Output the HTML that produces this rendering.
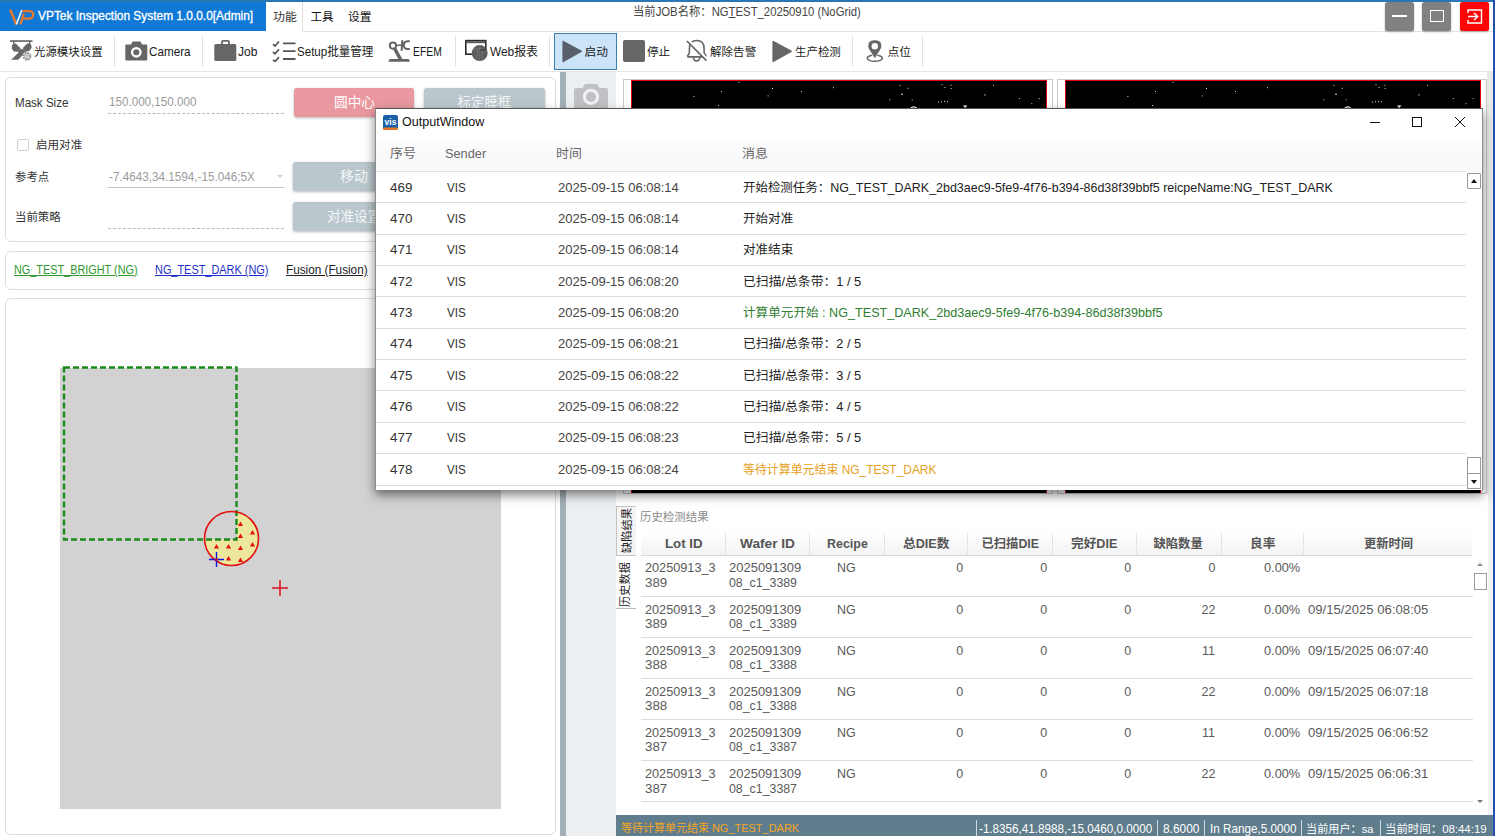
<!DOCTYPE html>
<html lang="zh">
<head>
<meta charset="utf-8">
<title>VPTek Inspection System</title>
<style>
*{box-sizing:border-box;margin:0;padding:0}
html,body{width:1495px;height:836px;overflow:hidden;background:#fff}
body{font-family:"Liberation Sans","Noto Sans CJK SC",sans-serif;font-size:12px;color:#222;position:relative}
.a{position:absolute;white-space:nowrap}
.x{position:absolute;white-space:nowrap;line-height:16px;height:16px;transform-origin:0 50%}
#topline{left:0;top:0;width:1495px;height:1.5px;background:#2c76b4}
#rightline{left:1493px;top:0;width:2px;height:836px;background:#2350ae}
#titleblue{left:0;top:1px;width:266px;height:30px;background:#1079d6}
#titleline{left:302px;top:31px;width:1191px;height:1px;background:#e2e2e2}
#tabsel{left:302px;top:2px;width:1px;height:30px;background:#dedede}
.wbtn{position:absolute;top:1.5px;width:29px;height:29.5px;border-radius:2.5px;background:#808282;box-shadow:0 1px 2px rgba(0,0,0,.3)}
#toolline{left:0;top:71px;width:1493px;height:1px;background:#e4e4e4}
.tsep{position:absolute;top:36px;width:1px;height:31px;background:#e2e2e2}
#startbtn{left:554px;top:33px;width:63px;height:36.5px;background:#cce4f7;border:1px solid #3e7fae}
.card{position:absolute;background:#fff;border:1px solid #dcdcdc;border-radius:6px}
.btn{position:absolute;height:29px;border-radius:3px;box-shadow:0 1px 3px rgba(0,0,0,.28)}
.dash{position:absolute;height:0;border-top:1px dashed #b8b8b8}
.vt{width:53px;height:21px;transform:rotate(-90deg);text-align:center;line-height:21px;font-size:11.2px;color:#222}
.hl{position:absolute;height:1px;background:#dedede}
.ssep{position:absolute;top:820px;width:1px;height:16px;background:#cfd8dc}
</style>
</head>
<body>
<!-- ======= TITLE BAR ======= -->
<div class="a" id="titleblue"></div>
<div class="a" id="titleline"></div>
<div class="a" id="tabsel"></div>
<svg class="a" style="left:9px;top:9px" width="26" height="16" viewBox="0 0 26 16">
  <path d="M1.6 1.6 L7 14.6" fill="none" stroke="#e8772a" stroke-width="2.5" stroke-linecap="round"/>
  <path d="M7.6 14.8 L12.6 1.6" fill="none" stroke="#e4ecf4" stroke-width="1.7" stroke-linecap="round"/>
  <path d="M11.6 14.6 L14.6 5.6" fill="none" stroke="#e8772a" stroke-width="2.3" stroke-linecap="round"/>
  <path d="M14.4 2.2 H20 Q24.4 2.2 24.2 6 Q24 9.6 19.4 9.6 H15.2" fill="none" stroke="#e8772a" stroke-width="2.3" stroke-linecap="round" stroke-linejoin="round"/>
</svg>
<div class="wbtn" style="left:1385px"><div class="a" style="left:7px;top:13px;width:15px;height:2px;background:#fff"></div></div>
<div class="wbtn" style="left:1422px"><div class="a" style="left:8px;top:8px;width:14px;height:12px;border:1.5px solid #fff"></div></div>
<div class="wbtn" style="left:1460px;background:#fb0505">
  <svg class="a" style="left:6px;top:6px" width="18" height="17" viewBox="0 0 18 17"><path d="M2 5 V2 H15.5 V15 H2 V12" fill="none" stroke="#fff" stroke-width="1.4"/><path d="M2 8.5 H11.5 M8 5 L11.7 8.5 L8 12" fill="none" stroke="#fff" stroke-width="1.4"/></svg>
</div>
<!-- ======= TOOLBAR ======= -->
<div class="a" id="toolline"></div>
<div class="a" id="startbtn"></div>
<div class="tsep" style="left:114px"></div><div class="tsep" style="left:202px"></div><div class="tsep" style="left:455px"></div><div class="tsep" style="left:549px"></div><div class="tsep" style="left:852px"></div><div class="tsep" style="left:922px"></div>
<!-- light source icon -->
<svg class="a" style="left:10px;top:40px" width="24" height="22" viewBox="0 0 24 22">
  <rect x="0" y=".2" width="22.5" height="1.7" fill="#6a6a6a"/>
  <rect x="3" y="1.5" width="1.3" height="3" fill="#666"/><rect x="19" y="1.5" width="1.3" height="3" fill="#666"/>
  <path d="M2 5 L5.5 3.2 L10.5 8.2 L7.2 11.8 L3.8 11.5 L1.8 8.5 Z" fill="#666"/>
  <path d="M21.2 4.5 L17.6 3.2 L12.8 8 L15.8 11.8 L19.6 10.8 L21.6 7.6 Z" fill="#666"/>
  <path d="M12.6 8.6 L16 11.6 L8.2 19.8 L1.2 19.8 Z" fill="#666"/>
  <path d="M7.4 11.4 L10.4 8.4 L15 13 L12.5 16 Z" fill="#666"/>
  <circle cx="17" cy="16.3" r="4.6" fill="#fff"/>
  <circle cx="17" cy="16.3" r="3.5" fill="none" stroke="#8a8a8a" stroke-width="1.7" stroke-dasharray="1.75 1"/>
  <circle cx="17" cy="16.3" r="2.6" fill="#fff" stroke="#8a8a8a" stroke-width=".8"/>
  <circle cx="17" cy="16.3" r="1.1" fill="none" stroke="#8a8a8a" stroke-width=".7"/>
</svg>
<!-- camera -->
<svg class="a" style="left:125px;top:40px" width="23" height="22" viewBox="0 0 23 22">
  <path d="M1.5 4.5 H6 L7.5 1.5 H15.5 L17 4.5 H21 Q22.3 4.5 22.3 5.8 V19.2 Q22.3 20.5 21 20.5 H1.5 Q.3 20.5 .3 19.2 V5.8 Q.3 4.5 1.5 4.5 Z" fill="#666"/>
  <circle cx="11.3" cy="12.3" r="5.4" fill="#fff"/><circle cx="11.3" cy="12.3" r="3" fill="#666"/>
</svg>
<!-- job briefcase -->
<svg class="a" style="left:214px;top:39px" width="23" height="23" viewBox="0 0 23 23">
  <path d="M8 5 V2.8 Q8 1.8 9 1.8 H14 Q15 1.8 15 2.8 V5" fill="none" stroke="#666" stroke-width="1.8"/>
  <rect x=".3" y="5" width="22" height="17" rx="1.6" fill="#666"/>
</svg>
<!-- checklist -->
<svg class="a" style="left:272px;top:40px" width="24" height="22" viewBox="0 0 24 22">
  <path d="M1 4.2 L3 6 L7 1.5 M1 12 L3 13.8 L7 9.3 M1 19.8 L3 21.6 L7 17.1" fill="none" stroke="#555" stroke-width="1.7"/>
  <path d="M11 3.3 H23.5 M11 11.2 H23.5 M11 19 H23.5" stroke="#555" stroke-width="1.8"/>
</svg>
<!-- EFEM robot arm -->
<svg class="a" style="left:388px;top:40px" width="23" height="23" viewBox="0 0 23 23">
  <circle cx="4.9" cy="5.6" r="3.15" fill="none" stroke="#646464" stroke-width="1.9"/>
  <path d="M6.6 8.4 L12.6 19.6" stroke="#646464" stroke-width="3.4"/>
  <path d="M8 5.5 L15.6 5" stroke="#646464" stroke-width="1.7"/>
  <path d="M14.3 .2 L13.6 10.7" stroke="#646464" stroke-width="2.1"/>
  <path d="M21.8 1.3 H19.6 Q15.8 1.5 15.8 5.2 Q15.8 8.9 19.6 9.1 H21.8" fill="none" stroke="#646464" stroke-width="2"/>
  <path d="M.4 21.8 L1.6 19.1 H20.8 L21.9 21.8 Z" fill="#646464"/>
</svg>
<!-- web report -->
<svg class="a" style="left:464px;top:39px" width="25" height="24" viewBox="0 0 25 24">
  <rect x="1.8" y="1.6" width="20" height="13.6" fill="#fff" stroke="#2b2b2b" stroke-width="1.6"/>
  <rect x="2.4" y="2.2" width="18.8" height="2" fill="#5a5a5a"/>
  <circle cx="15.7" cy="14.1" r="8" fill="#5c5c5c"/>
  <path d="M9 10.5 Q15.7 8.5 22.4 10.5 M15.7 6.2 V22 M11.8 7.5 Q15.5 14 11.8 20.8 M19.6 7.5 Q16 14 19.6 20.8" fill="none" stroke="#737373" stroke-width=".9"/>
  <path d="M16.5 11.2 L22.3 10" stroke="#2b2b2b" stroke-width="1"/>
</svg>
<!-- start -->
<svg class="a" style="left:562px;top:40px" width="20" height="23" viewBox="0 0 20 23"><path d="M1.2 1.6 L19 11.3 L1.2 21.4 Z" fill="#57606b" stroke="#57606b" stroke-width="1.6" stroke-linejoin="round"/></svg>
<!-- stop -->
<div class="a" style="left:623px;top:40px;width:22px;height:22px;border-radius:2px;background:#666"></div>
<!-- bell off -->
<svg class="a" style="left:685px;top:39px" width="24" height="24" viewBox="0 0 24 24">
  <path d="M2.9 17.9 Q2.2 16.3 3.5 15.3 Q4.4 14.5 4.4 13 V9.5 Q4.4 1.5 11.8 1.5 Q19.1 1.5 19.1 9.5 V13 Q19.1 14.5 20.1 15.3 Q21.4 16.3 20.7 17.9 Z" fill="none" stroke="#666" stroke-width="1.6" stroke-linejoin="round"/>
  <path d="M8.4 18.2 Q8.6 21.9 11.6 21.9 Q14.6 21.9 14.8 18.2" fill="none" stroke="#666" stroke-width="1.6"/>
  <path d="M3 .8 L23.5 21.5" stroke="#fff" stroke-width="2.4"/>
  <path d="M1.9 2 L21.4 21.7" stroke="#666" stroke-width="1.7"/>
</svg>
<!-- production play -->
<svg class="a" style="left:772px;top:40px" width="20" height="23" viewBox="0 0 20 23"><path d="M1.2 1.6 L19 11.3 L1.2 21.4 Z" fill="#666" stroke="#666" stroke-width="1.6" stroke-linejoin="round"/></svg>
<!-- pin -->
<svg class="a" style="left:865px;top:39px" width="20" height="24" viewBox="0 0 20 24">
  <ellipse cx="9.8" cy="19.2" rx="7.6" ry="3.1" fill="none" stroke="#666" stroke-width="1.5"/>
  <path d="M9.8 19.8 L4.6 11.5 Q2.8 8.8 2.8 7.2 Q2.8 .8 9.8 .8 Q16.8 .8 16.8 7.2 Q16.8 8.8 15 11.5 Z" fill="#666" stroke="#fff" stroke-width=".8"/>
  <circle cx="9.8" cy="7.2" r="3.2" fill="#fff"/>
</svg>
<div class="x" style="left:37.9px;top:8.0px;font-size:12.2px;color:#fff;transform:scaleX(0.9774);-webkit-text-stroke:.3px #fff;">VPTek Inspection System 1.0.0.0[Admin]</div>
<div class="x" style="left:272.9px;top:8.6px;font-size:11.6px;color:#333;transform:scaleX(1.0257);">功能</div>
<div class="x" style="left:310.5px;top:8.6px;font-size:11.6px;color:#111;">工具</div>
<div class="x" style="left:347.7px;top:8.6px;font-size:11.6px;color:#111;transform:scaleX(1.0085);">设置</div>
<div class="x" style="left:632.9px;top:4.4px;font-size:12px;color:#444;transform:scaleX(0.9435);">当前JOB名称：NG<u>T</u>EST_20250910 (NoGrid)</div>
<div class="x" style="left:33.7px;top:43.6px;font-size:11.7px;color:#1a1a1a;transform:scaleX(0.9780);">光源模块设置</div>
<div class="x" style="left:149.1px;top:43.6px;font-size:12.4px;color:#1a1a1a;transform:scaleX(0.9438);">Camera</div>
<div class="x" style="left:237.5px;top:43.6px;font-size:12.4px;color:#1a1a1a;transform:scaleX(0.9708);">Job</div>
<div class="x" style="left:296.5px;top:43.6px;font-size:12.0px;color:#1a1a1a;transform:scaleX(0.9625);">Setup批量管理</div>
<div class="x" style="left:413.1px;top:43.6px;font-size:12.4px;color:#1a1a1a;transform:scaleX(0.8367);">EFEM</div>
<div class="x" style="left:489.5px;top:43.6px;font-size:12.0px;color:#1a1a1a;transform:scaleX(0.9903);">Web报表</div>
<div class="x" style="left:584.5px;top:43.6px;font-size:11.7px;color:#1a1a1a;">启动</div>
<div class="x" style="left:646.9px;top:43.6px;font-size:11.7px;color:#1a1a1a;">停止</div>
<div class="x" style="left:709.5px;top:43.6px;font-size:11.7px;color:#1a1a1a;transform:scaleX(0.9879);">解除告警</div>
<div class="x" style="left:794.5px;top:43.6px;font-size:11.7px;color:#1a1a1a;transform:scaleX(0.9794);">生产检测</div>
<div class="x" style="left:887.5px;top:43.6px;font-size:11.7px;color:#1a1a1a;">点位</div>
<!-- ======= LEFT PANEL ======= -->
<div class="card" style="left:5px;top:77px;width:551px;height:165px"></div>
<div class="dash" style="left:108px;top:113px;width:176px"></div>
<div class="btn" style="left:294px;top:88px;width:120px;background:#e8989e"></div>
<div class="btn" style="left:424px;top:88px;width:121px;background:#bac7cc"></div>
<div class="a" style="left:17px;top:139px;width:12px;height:12px;border:1px solid #cfcfcf;border-radius:2px;background:#fff"></div>
<div class="a" style="left:108px;top:187px;width:176px;height:1px;background:#c4c4c4"></div>
<div class="a" style="left:276.5px;top:175px;width:0;height:0;border-left:3.5px solid transparent;border-right:3.5px solid transparent;border-top:3.5px solid #d2d2d2"></div>
<div class="btn" style="left:293px;top:162px;width:121px;background:#bac7cc"></div>
<div class="dash" style="left:108px;top:228px;width:176px"></div>
<div class="btn" style="left:293px;top:202px;width:121px;background:#bac7cc"></div>
<div class="card" style="left:5px;top:251px;width:551px;height:39px"></div>
<div class="card" style="left:5px;top:298px;width:551px;height:537px"></div>
<div class="a" style="left:60px;top:368px;width:441px;height:441px;background:#d2d2d3"></div>
<svg class="a" style="left:55px;top:360px" width="260" height="250" viewBox="55 360 260 250">
  <circle cx="231.5" cy="538.5" r="27" fill="#d2d2d3"/>
  <path d="M237 512.1 A27 27 0 1 1 205 543.5 L205 540 L237 540 Z" fill="#ece79b"/>
  <rect x="64" y="367.5" width="172.5" height="172" fill="none" stroke="#1a8a1a" stroke-width="2.4" stroke-dasharray="6 3"/>
  <circle cx="231.5" cy="538.5" r="27" fill="none" stroke="#e01010" stroke-width="1.6"/>
  <g fill="#e01010">
    <path d="M240.5 521.5 l2.6 4.6 h-5.2z"/><path d="M252.5 530 l2.6 4.6 h-5.2z"/>
    <path d="M240.5 533.5 l2.6 4.6 h-5.2z"/><path d="M252.5 542 l2.6 4.6 h-5.2z"/>
    <path d="M216.5 544 l2.6 4.6 h-5.2z"/><path d="M228.5 544 l2.6 4.6 h-5.2z"/><path d="M240.5 545.5 l2.6 4.6 h-5.2z"/>
    <path d="M228.5 556 l2.6 4.6 h-5.2z"/><path d="M240.5 557.5 l2.6 4.6 h-5.2z"/>
  </g>
  <path d="M209 559.5 H224 M216.5 552 V567" stroke="#1515e0" stroke-width="1.4"/>
  <circle cx="216.5" cy="559.5" r="1.2" fill="#e01010"/>
  <path d="M272 588 H288 M280 580 V596" stroke="#de0f1a" stroke-width="1.5"/>
</svg>
<div class="x" style="left:14.5px;top:95.0px;font-size:12.3px;color:#333;transform:scaleX(0.9415);">Mask Size</div>
<div class="x" style="left:108.9px;top:94.2px;font-size:12.3px;color:#9b9b9b;transform:scaleX(0.9466);">150.000,150.000</div>
<div class="x" style="left:333.7px;top:95.0px;font-size:13.4px;color:#fff;transform:scaleX(1.0206);">圆中心</div>
<div class="x" style="left:457.5px;top:95.0px;font-size:13.4px;color:#f4f7f8;">标定膜框</div>
<div class="x" style="left:35.5px;top:136.8px;font-size:11.6px;color:#333;transform:scaleX(0.9959);">启用对准</div>
<div class="x" style="left:14.5px;top:169.4px;font-size:11.6px;color:#333;transform:scaleX(0.9828);">参考点</div>
<div class="x" style="left:108.9px;top:169.2px;font-size:12.3px;color:#9b9b9b;transform:scaleX(0.9520);">-7.4643,34.1594,-15.046;5X</div>
<div class="x" style="left:339.9px;top:169.4px;font-size:13.4px;color:#f4f7f8;transform:scaleX(1.0380);">移动</div>
<div class="x" style="left:14.5px;top:209.0px;font-size:11.6px;color:#333;transform:scaleX(0.9830);">当前策略</div>
<div class="x" style="left:327.1px;top:209.0px;font-size:13.4px;color:#f4f7f8;transform:scaleX(1.0082);">对准设置</div>
<div class="x" style="left:13.7px;top:262.0px;font-size:12.3px;color:#2e9a2e;transform:scaleX(0.8838);text-decoration:underline;">NG_TEST_BRIGHT (NG)</div>
<div class="x" style="left:154.9px;top:262.0px;font-size:12.3px;color:#1c2fc8;transform:scaleX(0.8875);text-decoration:underline;">NG_TEST_DARK (NG)</div>
<div class="x" style="left:285.7px;top:262.0px;font-size:12.3px;color:#222;transform:scaleX(0.9551);text-decoration:underline;">Fusion (Fusion)</div>
<!-- ======= RIGHT PANEL ======= -->
<div class="a" style="left:560px;top:72px;width:6px;height:764px;background:#a3b0b7"></div>
<div class="a" style="left:566px;top:72px;width:50px;height:764px;background:#eceff2"></div>
<svg class="a" style="left:573px;top:82px" width="36" height="30" viewBox="0 0 36 30">
  <path d="M3 6 H9.5 L12 2 H24 L26.5 6 H33 Q35 6 35 8 V30 H1 V8 Q1 6 3 6 Z" fill="#bfc1c4"/>
  <circle cx="18" cy="14.8" r="6.6" fill="none" stroke="#f1f2f4" stroke-width="3"/>
</svg>
<div class="a" style="left:1487px;top:72px;width:6px;height:764px;background:linear-gradient(#e6eae7 0,#e6eae7 420px,#f1f3f4 432px,#f1f3f4 100%)"></div>
<!-- image panels -->
<div class="a" style="left:623px;top:79px;width:430px;height:415px;border:1px solid #c9c9c9;background:#fff"></div>
<div class="a" style="left:631px;top:80px;width:416px;height:413px;border:1px solid #e00010;border-bottom:none;background:#000"></div>
<div class="a" style="left:1057px;top:79px;width:430px;height:415px;border:1px solid #c9c9c9;background:#fff"></div>
<div class="a" style="left:1065px;top:80px;width:416px;height:413px;border:1px solid #e00010;border-bottom:none;background:#000"></div>
<svg class="a" style="left:632px;top:81px" width="850" height="28" viewBox="0 0 850 28">
 <g fill="#fff">
<rect x="267.6" y="3.8" width="1" height="1" opacity=".85"/>
<rect x="275.7" y="6.8" width="1" height="1" opacity=".85"/>
<rect x="269.0" y="12.7" width="2" height="1" opacity=".85"/>
<rect x="257.3" y="18.3" width="1" height="1" opacity=".85"/>
<rect x="279.7" y="18.3" width="1" height="1" opacity=".85"/>
<rect x="309.5" y="3.1" width="1" height="1" opacity=".85"/>
<rect x="312.5" y="6.0" width="1" height="1" opacity=".85"/>
<rect x="318.4" y="3.8" width="1" height="1" opacity=".85"/>
<rect x="318.7" y="7.0" width="1" height="1" opacity=".85"/>
<rect x="352.2" y="13.4" width="1.3" height="1" opacity=".85"/>
<rect x="361.0" y="3.8" width="1" height="1" opacity=".85"/>
<rect x="399.3" y="22.2" width="1" height="1" opacity=".85"/>
<rect x="406.7" y="17.1" width="1" height="1" opacity=".85"/>
<rect x="386.8" y="17.0" width="1" height="1" opacity=".85"/>
<rect x="61.4" y="15.0" width="1" height="1" opacity=".85"/>
<rect x="89.0" y="10.0" width="1" height="1" opacity=".85"/>
<rect x="86.0" y="24.0" width="1" height="1" opacity=".85"/>
<rect x="135.6" y="14.4" width="1" height="1" opacity=".85"/>
<rect x="140.0" y="7.0" width="1" height="1" opacity=".85"/>
<rect x="169.0" y="10.0" width="1" height="1" opacity=".85"/>
<rect x="201.0" y="6.2" width="1" height="1" opacity=".85"/>
<rect x="106.5" y="1.0" width="1" height="1" opacity=".85"/>
<rect x="306.0" y="20.6" width="1.2" height="1" opacity=".85"/>
<rect x="309.0" y="20.2" width="1" height="1" opacity=".85"/>
<rect x="312.0" y="19.8" width="1.2" height="1" opacity=".85"/>
<rect x="315.0" y="20.3" width="1" height="1" opacity=".85"/>
<path d="M278.5 27.5 Q281.8 24.2 285.0 27.5" fill="none" stroke="#fff" stroke-width="1.2"/>
<path d="M331.0 24.6 h4.4 l-2.2 2.4z"/>
<rect x="701.6" y="3.8" width="1" height="1" opacity=".85"/>
<rect x="709.7" y="6.8" width="1" height="1" opacity=".85"/>
<rect x="703.0" y="12.7" width="2" height="1" opacity=".85"/>
<rect x="691.3" y="18.3" width="1" height="1" opacity=".85"/>
<rect x="713.7" y="18.3" width="1" height="1" opacity=".85"/>
<rect x="743.5" y="3.1" width="1" height="1" opacity=".85"/>
<rect x="746.5" y="6.0" width="1" height="1" opacity=".85"/>
<rect x="752.4" y="3.8" width="1" height="1" opacity=".85"/>
<rect x="752.7" y="7.0" width="1" height="1" opacity=".85"/>
<rect x="786.2" y="13.4" width="1.3" height="1" opacity=".85"/>
<rect x="795.0" y="3.8" width="1" height="1" opacity=".85"/>
<rect x="833.3" y="22.2" width="1" height="1" opacity=".85"/>
<rect x="840.7" y="17.1" width="1" height="1" opacity=".85"/>
<rect x="820.8" y="17.0" width="1" height="1" opacity=".85"/>
<rect x="495.4" y="15.0" width="1" height="1" opacity=".85"/>
<rect x="523.0" y="10.0" width="1" height="1" opacity=".85"/>
<rect x="520.0" y="24.0" width="1" height="1" opacity=".85"/>
<rect x="569.6" y="14.4" width="1" height="1" opacity=".85"/>
<rect x="574.0" y="7.0" width="1" height="1" opacity=".85"/>
<rect x="603.0" y="10.0" width="1" height="1" opacity=".85"/>
<rect x="635.0" y="6.2" width="1" height="1" opacity=".85"/>
<rect x="540.5" y="1.0" width="1" height="1" opacity=".85"/>
<rect x="740.0" y="20.6" width="1.2" height="1" opacity=".85"/>
<rect x="743.0" y="20.2" width="1" height="1" opacity=".85"/>
<rect x="746.0" y="19.8" width="1.2" height="1" opacity=".85"/>
<rect x="749.0" y="20.3" width="1" height="1" opacity=".85"/>
<path d="M712.5 27.5 Q715.8 24.2 719.0 27.5" fill="none" stroke="#fff" stroke-width="1.2"/>
<path d="M765.0 24.6 h4.4 l-2.2 2.4z"/>
 </g>
</svg>
<!-- lower area -->
<div class="a" style="left:616px;top:494px;width:872px;height:322px;background:#fff"></div>
<!-- vertical tabs -->
<div class="a" style="left:616px;top:506px;width:20px;height:50px;background:#f5f5f5;border:1px solid #c4c4c4;border-right:none"></div>
<div class="a" style="left:616px;top:608px;width:20px;height:1px;background:#bbb"></div>
<div class="a vt" style="left:600.5px;top:520px">缺陷结果</div>
<div class="a vt" style="left:599px;top:573.5px">历史数据</div>
<div class="a" style="left:641px;top:531px;width:831px;height:25px;background:linear-gradient(#fff,#f3f3f3);border-bottom:1px solid #d8d8d8"></div>
<div class="a" style="left:724.5px;top:533px;width:1px;height:22px;background:#e4e4e4"></div>
<div class="a" style="left:809px;top:533px;width:1px;height:22px;background:#e4e4e4"></div>
<div class="a" style="left:883.5px;top:533px;width:1px;height:22px;background:#e4e4e4"></div>
<div class="a" style="left:967px;top:533px;width:1px;height:22px;background:#e4e4e4"></div>
<div class="a" style="left:1052px;top:533px;width:1px;height:22px;background:#e4e4e4"></div>
<div class="a" style="left:1135.5px;top:533px;width:1px;height:22px;background:#e4e4e4"></div>
<div class="a" style="left:1220.5px;top:533px;width:1px;height:22px;background:#e4e4e4"></div>
<div class="a" style="left:1303px;top:533px;width:1px;height:22px;background:#e4e4e4"></div>
<div class="hl" style="left:641px;top:596px;width:832px"></div>
<div class="hl" style="left:641px;top:637px;width:832px"></div>
<div class="hl" style="left:641px;top:678px;width:832px"></div>
<div class="hl" style="left:641px;top:719px;width:832px"></div>
<div class="hl" style="left:641px;top:760px;width:832px"></div>
<div class="hl" style="left:641px;top:801px;width:832px"></div>
<div class="a" style="left:1477px;top:563px;width:0;height:0;border-left:3.5px solid transparent;border-right:3.5px solid transparent;border-bottom:3.5px solid #8a8a8a"></div>
<div class="a" style="left:1474px;top:573px;width:13px;height:17px;border:1px solid #9a9a9a;background:#fff"></div>
<div class="a" style="left:1477px;top:800px;width:0;height:0;border-left:3.5px solid transparent;border-right:3.5px solid transparent;border-top:3.5px solid #777"></div>
<div class="x" style="left:639.5px;top:509.0px;font-size:11.5px;color:#8a8a8a;transform:scaleX(0.9942);">历史检测结果</div>
<div class="x" style="left:664.5px;top:536.0px;font-size:12.3px;color:#555;transform:scaleX(1.0791);font-weight:bold;">Lot ID</div>
<div class="x" style="left:739.7px;top:536.0px;font-size:12.3px;color:#555;transform:scaleX(1.1129);font-weight:bold;">Wafer ID</div>
<div class="x" style="left:826.5px;top:536.0px;font-size:12.3px;color:#555;transform:scaleX(1.0117);font-weight:bold;">Recipe</div>
<div class="x" style="left:902.9px;top:536.0px;font-size:12.3px;color:#555;transform:scaleX(1.0290);font-weight:bold;">总DIE数</div>
<div class="x" style="left:981.5px;top:536.0px;font-size:12.3px;color:#555;font-weight:bold;">已扫描DIE</div>
<div class="x" style="left:1070.9px;top:536.0px;font-size:12.3px;color:#555;transform:scaleX(1.0290);font-weight:bold;">完好DIE</div>
<div class="x" style="left:1153.5px;top:536.0px;font-size:12.3px;color:#555;font-weight:bold;">缺陷数量</div>
<div class="x" style="left:1249.7px;top:536.0px;font-size:12.3px;color:#555;transform:scaleX(1.0321);font-weight:bold;">良率</div>
<div class="x" style="left:1363.7px;top:536.0px;font-size:12.3px;color:#555;transform:scaleX(0.9959);font-weight:bold;">更新时间</div>
<div class="x" style="left:645.1px;top:560.4px;font-size:12.5px;color:#5a5a5a;transform:scaleX(1.0154);">20250913_3</div>
<div class="x" style="left:645.1px;top:575.0px;font-size:12.5px;color:#5a5a5a;transform:scaleX(1.0643);">389</div>
<div class="x" style="left:729.1px;top:560.4px;font-size:12.5px;color:#5a5a5a;transform:scaleX(1.0384);">2025091309</div>
<div class="x" style="left:729.1px;top:575.0px;font-size:12.5px;color:#5a5a5a;transform:scaleX(0.9880);">08_c1_3389</div>
<div class="x" style="left:837.1px;top:560.4px;font-size:12.5px;color:#5a5a5a;">NG</div>
<div class="x" style="left:956.3px;top:560.4px;font-size:12.5px;color:#5a5a5a;">0</div>
<div class="x" style="left:1040.3px;top:560.4px;font-size:12.5px;color:#5a5a5a;">0</div>
<div class="x" style="left:1124.3px;top:560.4px;font-size:12.5px;color:#5a5a5a;">0</div>
<div class="x" style="left:1208.4px;top:560.4px;font-size:12.5px;color:#5a5a5a;">0</div>
<div class="x" style="left:1263.9px;top:560.4px;font-size:12.5px;color:#5a5a5a;transform:scaleX(1.0211);">0.00%</div>
<div class="x" style="left:645.1px;top:601.5px;font-size:12.5px;color:#5a5a5a;transform:scaleX(1.0154);">20250913_3</div>
<div class="x" style="left:645.1px;top:616.1px;font-size:12.5px;color:#5a5a5a;transform:scaleX(1.0643);">389</div>
<div class="x" style="left:729.1px;top:601.5px;font-size:12.5px;color:#5a5a5a;transform:scaleX(1.0384);">2025091309</div>
<div class="x" style="left:729.1px;top:616.1px;font-size:12.5px;color:#5a5a5a;transform:scaleX(0.9880);">08_c1_3389</div>
<div class="x" style="left:837.1px;top:601.5px;font-size:12.5px;color:#5a5a5a;">NG</div>
<div class="x" style="left:956.3px;top:601.5px;font-size:12.5px;color:#5a5a5a;">0</div>
<div class="x" style="left:1040.3px;top:601.5px;font-size:12.5px;color:#5a5a5a;">0</div>
<div class="x" style="left:1124.3px;top:601.5px;font-size:12.5px;color:#5a5a5a;">0</div>
<div class="x" style="left:1201.5px;top:601.5px;font-size:12.5px;color:#5a5a5a;">22</div>
<div class="x" style="left:1263.9px;top:601.5px;font-size:12.5px;color:#5a5a5a;transform:scaleX(1.0211);">0.00%</div>
<div class="x" style="left:1308.3px;top:601.5px;font-size:12.5px;color:#5a5a5a;transform:scaleX(1.0497);">09/15/2025 06:08:05</div>
<div class="x" style="left:645.1px;top:642.6px;font-size:12.5px;color:#5a5a5a;transform:scaleX(1.0154);">20250913_3</div>
<div class="x" style="left:645.1px;top:657.2px;font-size:12.5px;color:#5a5a5a;transform:scaleX(1.0643);">388</div>
<div class="x" style="left:729.1px;top:642.6px;font-size:12.5px;color:#5a5a5a;transform:scaleX(1.0384);">2025091309</div>
<div class="x" style="left:729.1px;top:657.2px;font-size:12.5px;color:#5a5a5a;transform:scaleX(0.9880);">08_c1_3388</div>
<div class="x" style="left:837.1px;top:642.6px;font-size:12.5px;color:#5a5a5a;">NG</div>
<div class="x" style="left:956.3px;top:642.6px;font-size:12.5px;color:#5a5a5a;">0</div>
<div class="x" style="left:1040.3px;top:642.6px;font-size:12.5px;color:#5a5a5a;">0</div>
<div class="x" style="left:1124.3px;top:642.6px;font-size:12.5px;color:#5a5a5a;">0</div>
<div class="x" style="left:1202.0px;top:642.6px;font-size:12.5px;color:#5a5a5a;">11</div>
<div class="x" style="left:1263.9px;top:642.6px;font-size:12.5px;color:#5a5a5a;transform:scaleX(1.0211);">0.00%</div>
<div class="x" style="left:1308.3px;top:642.6px;font-size:12.5px;color:#5a5a5a;transform:scaleX(1.0497);">09/15/2025 06:07:40</div>
<div class="x" style="left:645.1px;top:683.7px;font-size:12.5px;color:#5a5a5a;transform:scaleX(1.0154);">20250913_3</div>
<div class="x" style="left:645.1px;top:698.3px;font-size:12.5px;color:#5a5a5a;transform:scaleX(1.0643);">388</div>
<div class="x" style="left:729.1px;top:683.7px;font-size:12.5px;color:#5a5a5a;transform:scaleX(1.0384);">2025091309</div>
<div class="x" style="left:729.1px;top:698.3px;font-size:12.5px;color:#5a5a5a;transform:scaleX(0.9880);">08_c1_3388</div>
<div class="x" style="left:837.1px;top:683.7px;font-size:12.5px;color:#5a5a5a;">NG</div>
<div class="x" style="left:956.3px;top:683.7px;font-size:12.5px;color:#5a5a5a;">0</div>
<div class="x" style="left:1040.3px;top:683.7px;font-size:12.5px;color:#5a5a5a;">0</div>
<div class="x" style="left:1124.3px;top:683.7px;font-size:12.5px;color:#5a5a5a;">0</div>
<div class="x" style="left:1201.5px;top:683.7px;font-size:12.5px;color:#5a5a5a;">22</div>
<div class="x" style="left:1263.9px;top:683.7px;font-size:12.5px;color:#5a5a5a;transform:scaleX(1.0211);">0.00%</div>
<div class="x" style="left:1308.3px;top:683.7px;font-size:12.5px;color:#5a5a5a;transform:scaleX(1.0497);">09/15/2025 06:07:18</div>
<div class="x" style="left:645.1px;top:724.8px;font-size:12.5px;color:#5a5a5a;transform:scaleX(1.0154);">20250913_3</div>
<div class="x" style="left:645.1px;top:739.4px;font-size:12.5px;color:#5a5a5a;transform:scaleX(1.0643);">387</div>
<div class="x" style="left:729.1px;top:724.8px;font-size:12.5px;color:#5a5a5a;transform:scaleX(1.0384);">2025091309</div>
<div class="x" style="left:729.1px;top:739.4px;font-size:12.5px;color:#5a5a5a;transform:scaleX(0.9880);">08_c1_3387</div>
<div class="x" style="left:837.1px;top:724.8px;font-size:12.5px;color:#5a5a5a;">NG</div>
<div class="x" style="left:956.3px;top:724.8px;font-size:12.5px;color:#5a5a5a;">0</div>
<div class="x" style="left:1040.3px;top:724.8px;font-size:12.5px;color:#5a5a5a;">0</div>
<div class="x" style="left:1124.3px;top:724.8px;font-size:12.5px;color:#5a5a5a;">0</div>
<div class="x" style="left:1202.0px;top:724.8px;font-size:12.5px;color:#5a5a5a;">11</div>
<div class="x" style="left:1263.9px;top:724.8px;font-size:12.5px;color:#5a5a5a;transform:scaleX(1.0211);">0.00%</div>
<div class="x" style="left:1308.3px;top:724.8px;font-size:12.5px;color:#5a5a5a;transform:scaleX(1.0497);">09/15/2025 06:06:52</div>
<div class="x" style="left:645.1px;top:765.9px;font-size:12.5px;color:#5a5a5a;transform:scaleX(1.0154);">20250913_3</div>
<div class="x" style="left:645.1px;top:780.5px;font-size:12.5px;color:#5a5a5a;transform:scaleX(1.0643);">387</div>
<div class="x" style="left:729.1px;top:765.9px;font-size:12.5px;color:#5a5a5a;transform:scaleX(1.0384);">2025091309</div>
<div class="x" style="left:729.1px;top:780.5px;font-size:12.5px;color:#5a5a5a;transform:scaleX(0.9880);">08_c1_3387</div>
<div class="x" style="left:837.1px;top:765.9px;font-size:12.5px;color:#5a5a5a;">NG</div>
<div class="x" style="left:956.3px;top:765.9px;font-size:12.5px;color:#5a5a5a;">0</div>
<div class="x" style="left:1040.3px;top:765.9px;font-size:12.5px;color:#5a5a5a;">0</div>
<div class="x" style="left:1124.3px;top:765.9px;font-size:12.5px;color:#5a5a5a;">0</div>
<div class="x" style="left:1201.5px;top:765.9px;font-size:12.5px;color:#5a5a5a;">22</div>
<div class="x" style="left:1263.9px;top:765.9px;font-size:12.5px;color:#5a5a5a;transform:scaleX(1.0211);">0.00%</div>
<div class="x" style="left:1308.3px;top:765.9px;font-size:12.5px;color:#5a5a5a;transform:scaleX(1.0497);">09/15/2025 06:06:31</div>
<!-- status bar -->
<div class="a" style="left:616px;top:815px;width:877px;height:21px;background:#5f7d8c"></div>
<div class="ssep" style="left:976px"></div><div class="ssep" style="left:1157px"></div><div class="ssep" style="left:1204px"></div><div class="ssep" style="left:1301px"></div><div class="ssep" style="left:1380px"></div>
<div class="x" style="left:620.5px;top:820.4px;font-size:11.8px;color:#f5a623;transform:scaleX(0.9310);">等待计算单元结束 NG_TEST_DARK</div>
<div class="x" style="left:978.9px;top:820.6px;font-size:12.2px;color:#fff;transform:scaleX(0.9572);">-1.8356,41.8988,-15.0460,0.0000</div>
<div class="x" style="left:1162.7px;top:820.6px;font-size:12.2px;color:#fff;transform:scaleX(0.9764);">8.6000</div>
<div class="x" style="left:1209.7px;top:820.6px;font-size:12.2px;color:#fff;transform:scaleX(0.9585);">In Range,5.0000</div>
<div class="x" style="left:1306.3px;top:820.6px;font-size:11.8px;color:#fff;transform:scaleX(0.9433);">当前用户：sa</div>
<div class="x" style="left:1385.1px;top:820.6px;font-size:11.8px;color:#fff;transform:scaleX(0.9685);">当前时间：08:44:19</div>

<!-- ======= OUTPUT WINDOW ======= -->
<div class="a" style="left:374.5px;top:108px;width:1108.5px;height:382px;background:#fff;border:1px solid #8c8c8c;border-top-color:#555;border-bottom:none;box-shadow:0 5px 10px rgba(0,0,0,.5)"></div>
<svg class="a" style="left:383px;top:115px" width="15" height="15" viewBox="0 0 15 15"><rect x="0" y="0" width="15" height="15" rx="2" fill="#1b5fa8"/><rect x="0" y="12.6" width="15" height="2.4" rx="1" fill="#e8742a"/><text x="7.5" y="9.8" font-family="Liberation Sans, sans-serif" font-size="8.5" font-weight="bold" fill="#fff" text-anchor="middle">vis</text></svg>
<svg class="a" style="left:1365px;top:112px" width="110" height="22" viewBox="1365 112 110 22"><path d="M1370 122.5 H1380" stroke="#111" stroke-width="1"/><rect x="1412.5" y="117.5" width="9" height="9" fill="none" stroke="#111" stroke-width="1"/><path d="M1455 117 L1465 127 M1465 117 L1455 127" stroke="#111" stroke-width="1"/></svg>
<div class="a" style="left:376px;top:139px;width:1105px;height:33px;background:linear-gradient(#fff,#faf9fb 30%,#f9f8fa)"></div><div class="hl" style="left:376px;top:171px;width:1090px;background:#e0dfe2"></div>
<div class="hl" style="left:376px;top:202px;width:1090px;background:#dfdfdf"></div>
<div class="hl" style="left:376px;top:234px;width:1090px;background:#dfdfdf"></div>
<div class="hl" style="left:376px;top:265px;width:1090px;background:#dfdfdf"></div>
<div class="hl" style="left:376px;top:296px;width:1090px;background:#dfdfdf"></div>
<div class="hl" style="left:376px;top:328px;width:1090px;background:#dfdfdf"></div>
<div class="hl" style="left:376px;top:359px;width:1090px;background:#dfdfdf"></div>
<div class="hl" style="left:376px;top:390px;width:1090px;background:#dfdfdf"></div>
<div class="hl" style="left:376px;top:422px;width:1090px;background:#dfdfdf"></div>
<div class="hl" style="left:376px;top:453px;width:1090px;background:#dfdfdf"></div>
<div class="hl" style="left:376px;top:485px;width:1090px;background:#dfdfdf"></div>
<div class="a" style="left:1467px;top:173px;width:14px;height:16px;border:1px solid #9a9a9a;border-radius:1px;background:#fff"></div><div class="a" style="left:1470.5px;top:179px;width:0;height:0;border-left:3.5px solid transparent;border-right:3.5px solid transparent;border-bottom:4px solid #111"></div>
<div class="a" style="left:1467px;top:457px;width:14px;height:17px;border:1px solid #9a9a9a;background:#fff"></div>
<div class="a" style="left:1467px;top:473px;width:14px;height:16px;border:1px solid #9a9a9a;background:#fff"></div><div class="a" style="left:1470.5px;top:480px;width:0;height:0;border-left:3.5px solid transparent;border-right:3.5px solid transparent;border-top:4px solid #111"></div>
<div class="x" style="left:401.9px;top:114.4px;font-size:12.4px;color:#111;transform:scaleX(1.0140);">OutputWindow</div>
<div class="x" style="left:389.7px;top:146.0px;font-size:12.2px;color:#666;transform:scaleX(1.0667);">序号</div>
<div class="x" style="left:444.5px;top:146.0px;font-size:12.2px;color:#666;transform:scaleX(1.0480);">Sender</div>
<div class="x" style="left:555.5px;top:146.0px;font-size:12.2px;color:#666;transform:scaleX(1.0585);">时间</div>
<div class="x" style="left:742.3px;top:146.0px;font-size:12.2px;color:#666;transform:scaleX(1.0667);">消息</div>
<div class="x" style="left:389.7px;top:179.6px;font-size:12.4px;color:#333;transform:scaleX(1.0828);">469</div>
<div class="x" style="left:446.5px;top:179.6px;font-size:12.4px;color:#333;transform:scaleX(0.9407);">VIS</div>
<div class="x" style="left:557.7px;top:179.6px;font-size:12.4px;color:#444;transform:scaleX(1.0499);">2025-09-15 06:08:14</div>
<div class="x" style="left:742.5px;top:179.6px;font-size:12.2px;color:#222;transform:scaleX(1.0219);">开始检测任务：NG_TEST_DARK_2bd3aec9-5fe9-4f76-b394-86d38f39bbf5 reicpeName:NG_TEST_DARK</div>
<div class="x" style="left:389.7px;top:210.9px;font-size:12.4px;color:#333;transform:scaleX(1.0828);">470</div>
<div class="x" style="left:446.5px;top:210.9px;font-size:12.4px;color:#333;transform:scaleX(0.9407);">VIS</div>
<div class="x" style="left:557.7px;top:210.9px;font-size:12.4px;color:#444;transform:scaleX(1.0499);">2025-09-15 06:08:14</div>
<div class="x" style="left:742.5px;top:210.9px;font-size:12.2px;color:#222;transform:scaleX(1.0297);">开始对准</div>
<div class="x" style="left:389.7px;top:242.2px;font-size:12.4px;color:#333;transform:scaleX(1.0828);">471</div>
<div class="x" style="left:446.5px;top:242.2px;font-size:12.4px;color:#333;transform:scaleX(0.9407);">VIS</div>
<div class="x" style="left:557.7px;top:242.2px;font-size:12.4px;color:#444;transform:scaleX(1.0499);">2025-09-15 06:08:14</div>
<div class="x" style="left:742.5px;top:242.2px;font-size:12.2px;color:#222;transform:scaleX(1.0297);">对准结束</div>
<div class="x" style="left:389.7px;top:273.6px;font-size:12.4px;color:#333;transform:scaleX(1.0828);">472</div>
<div class="x" style="left:446.5px;top:273.6px;font-size:12.4px;color:#333;transform:scaleX(0.9407);">VIS</div>
<div class="x" style="left:557.7px;top:273.6px;font-size:12.4px;color:#444;transform:scaleX(1.0499);">2025-09-15 06:08:20</div>
<div class="x" style="left:742.5px;top:273.6px;font-size:12.2px;color:#222;transform:scaleX(1.0514);">已扫描/总条带：1 / 5</div>
<div class="x" style="left:389.7px;top:304.9px;font-size:12.4px;color:#333;transform:scaleX(1.0828);">473</div>
<div class="x" style="left:446.5px;top:304.9px;font-size:12.4px;color:#333;transform:scaleX(0.9407);">VIS</div>
<div class="x" style="left:557.7px;top:304.9px;font-size:12.4px;color:#444;transform:scaleX(1.0499);">2025-09-15 06:08:20</div>
<div class="x" style="left:742.5px;top:304.9px;font-size:12.2px;color:#2f7d32;transform:scaleX(1.0340);">计算单元开始 : NG_TEST_DARK_2bd3aec9-5fe9-4f76-b394-86d38f39bbf5</div>
<div class="x" style="left:389.7px;top:336.2px;font-size:12.4px;color:#333;transform:scaleX(1.0828);">474</div>
<div class="x" style="left:446.5px;top:336.2px;font-size:12.4px;color:#333;transform:scaleX(0.9407);">VIS</div>
<div class="x" style="left:557.7px;top:336.2px;font-size:12.4px;color:#444;transform:scaleX(1.0499);">2025-09-15 06:08:21</div>
<div class="x" style="left:742.5px;top:336.2px;font-size:12.2px;color:#222;transform:scaleX(1.0514);">已扫描/总条带：2 / 5</div>
<div class="x" style="left:389.7px;top:367.5px;font-size:12.4px;color:#333;transform:scaleX(1.0828);">475</div>
<div class="x" style="left:446.5px;top:367.5px;font-size:12.4px;color:#333;transform:scaleX(0.9407);">VIS</div>
<div class="x" style="left:557.7px;top:367.5px;font-size:12.4px;color:#444;transform:scaleX(1.0499);">2025-09-15 06:08:22</div>
<div class="x" style="left:742.5px;top:367.5px;font-size:12.2px;color:#222;transform:scaleX(1.0514);">已扫描/总条带：3 / 5</div>
<div class="x" style="left:389.7px;top:398.8px;font-size:12.4px;color:#333;transform:scaleX(1.0828);">476</div>
<div class="x" style="left:446.5px;top:398.8px;font-size:12.4px;color:#333;transform:scaleX(0.9407);">VIS</div>
<div class="x" style="left:557.7px;top:398.8px;font-size:12.4px;color:#444;transform:scaleX(1.0499);">2025-09-15 06:08:22</div>
<div class="x" style="left:742.5px;top:398.8px;font-size:12.2px;color:#222;transform:scaleX(1.0514);">已扫描/总条带：4 / 5</div>
<div class="x" style="left:389.7px;top:430.2px;font-size:12.4px;color:#333;transform:scaleX(1.0828);">477</div>
<div class="x" style="left:446.5px;top:430.2px;font-size:12.4px;color:#333;transform:scaleX(0.9407);">VIS</div>
<div class="x" style="left:557.7px;top:430.2px;font-size:12.4px;color:#444;transform:scaleX(1.0499);">2025-09-15 06:08:23</div>
<div class="x" style="left:742.5px;top:430.2px;font-size:12.2px;color:#222;transform:scaleX(1.0514);">已扫描/总条带：5 / 5</div>
<div class="x" style="left:389.7px;top:461.5px;font-size:12.4px;color:#333;transform:scaleX(1.0828);">478</div>
<div class="x" style="left:446.5px;top:461.5px;font-size:12.4px;color:#333;transform:scaleX(0.9407);">VIS</div>
<div class="x" style="left:557.7px;top:461.5px;font-size:12.4px;color:#444;transform:scaleX(1.0499);">2025-09-15 06:08:24</div>
<div class="x" style="left:742.5px;top:461.5px;font-size:12.2px;color:#e8a020;transform:scaleX(0.9781);">等待计算单元结束 NG_TEST_DARK</div>
<div class="a" id="topline"></div>
<div class="a" id="rightline"></div>
</body>
</html>
